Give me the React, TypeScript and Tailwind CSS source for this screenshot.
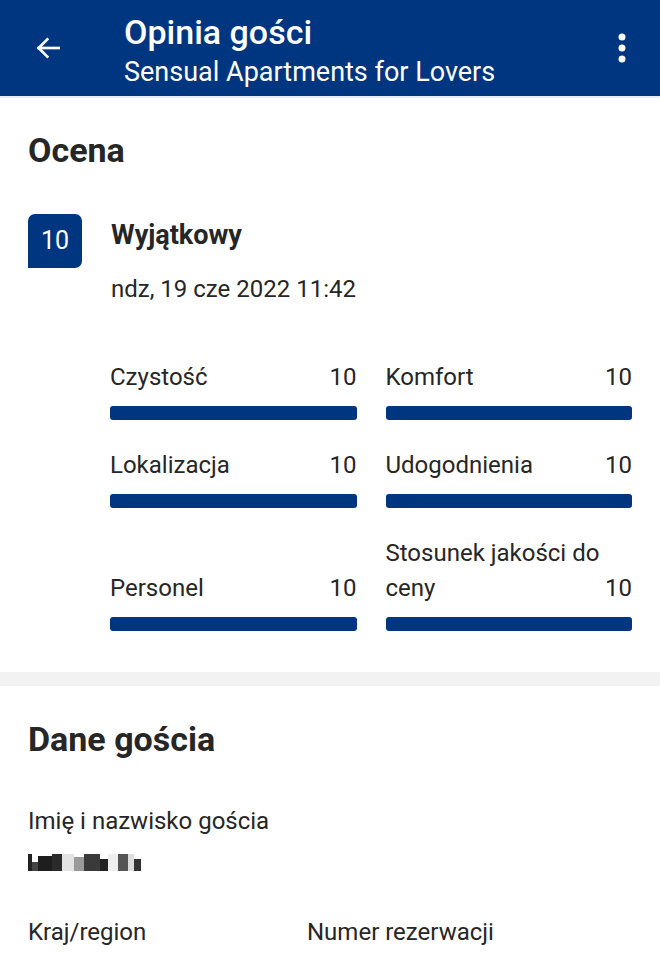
import React from 'react';

const font = { fontFamily: 'Roboto, "Noto Sans", sans-serif' };

const ratings = [
  { name: 'Czystość', score: 10 },
  { name: 'Komfort', score: 10 },
  { name: 'Lokalizacja', score: 10 },
  { name: 'Udogodnienia', score: 10 },
  { name: 'Personel', score: 10 },
  { name: 'Stosunek jakości do ceny', score: 10 },
];

function Rating({ name, score }: { name: string; score: number }) {
  return (
    <div className="flex flex-col justify-end">
      <div className="flex items-end justify-between text-[24px] leading-[35px] text-[#262626]">
        <span>{name}</span>
        <span className="shrink-0">{score}</span>
      </div>
      <div className="mt-[11px] h-[14px] rounded-[3px] bg-[#003580]" style={{ width: `${score * 10}%` }} />
    </div>
  );
}

export default function App() {
  return (
    <div className="w-[660px] h-[960px] overflow-hidden bg-white" style={font}>
      {/* top bar */}
      <header className="h-[98px] bg-[#003580] flex text-white border-b-2 border-[#e8edf5]">
        <div className="w-[124px] flex items-center justify-center pr-[28px]">
          <svg width="32" height="32" viewBox="0 0 24 24" fill="none" stroke="white" strokeWidth="2" strokeLinecap="square">
            <path d="M20 12H5" />
            <path d="M11.5 5.5L5 12l6.5 6.5" />
          </svg>
        </div>
        <div className="flex-1 flex flex-col pt-[12px]">
          <span className="text-[34px] font-medium leading-[41px]">Opinia gości</span>
          <span className="text-[27px] leading-[38px]">Sensual Apartments for Lovers</span>
        </div>
        <div className="w-[76px] flex items-center justify-center">
          <svg width="8" height="30" viewBox="0 0 8 30" fill="white">
            <circle cx="4" cy="4" r="3.5" />
            <circle cx="4" cy="15" r="3.5" />
            <circle cx="4" cy="26" r="3.5" />
          </svg>
        </div>
      </header>

      {/* Ocena */}
      <section className="px-[28px] pt-[30px] pb-[41px]">
        <h2 className="text-[34px] font-bold text-[#262626] leading-[44px]">Ocena</h2>
        <div className="mt-[42px] flex">
          <div className="w-[54px] h-[54px] bg-[#003580] text-white text-[25px] flex items-center justify-center rounded-t-[7px] rounded-br-[7px]">
            10
          </div>
          <div className="ml-[29px] pt-[4px]">
            <div className="text-[27px] font-bold text-[#262626] leading-[34px]">Wyjątkowy</div>
            <div className="mt-[22px] text-[24px] text-[#262626] leading-[30px]">ndz, 19 cze 2022 11:42</div>
          </div>
        </div>
        <div className="ml-[82px] mt-[56px] grid grid-cols-2 gap-x-[29px] gap-y-[28px]">
          {ratings.map((r) => (
            <Rating key={r.name} {...r} />
          ))}
        </div>
      </section>

      <div className="h-[14px] bg-[#f2f2f2]" />

      {/* Dane gościa */}
      <section className="px-[28px] pt-[31px]">
        <h2 className="text-[34px] font-bold text-[#262626] leading-[44px]">Dane gościa</h2>
        <div className="mt-[45px] text-[24px] text-[#262626] leading-[30px]">Imię i nazwisko gościa</div>
        <div className="mt-[17px] flex items-end h-[18px]">
          <div className="w-[4px] h-[17px] bg-[#222]" />
          <div className="w-[6px] h-[9px] bg-[#444]" />
          <div className="w-[14px] h-[15px] bg-[#1e1e1e]" />
          <div className="w-[10px] h-[17px] bg-[#2a2a2a]" />
          <div className="w-[12px] h-[17px] bg-[#e3e3e3]" />
          <div className="w-[10px] h-[14px] bg-[#9a9a9a]" />
          <div className="w-[16px] h-[17px] bg-[#3a3a3a]" />
          <div className="w-[8px] h-[12px] bg-[#222]" />
          <div className="w-[10px] h-[17px] bg-[#eee]" />
          <div className="w-[10px] h-[17px] bg-[#555]" />
          <div className="w-[6px] h-[17px] bg-[#ddd]" />
          <div className="w-[7px] h-[12px] bg-[#333]" />
        </div>
        <div className="mt-[46px] flex text-[24px] text-[#262626] leading-[30px]">
          <span className="w-[279px]">Kraj/region</span>
          <span>Numer rezerwacji</span>
        </div>
      </section>
    </div>
  );
}
